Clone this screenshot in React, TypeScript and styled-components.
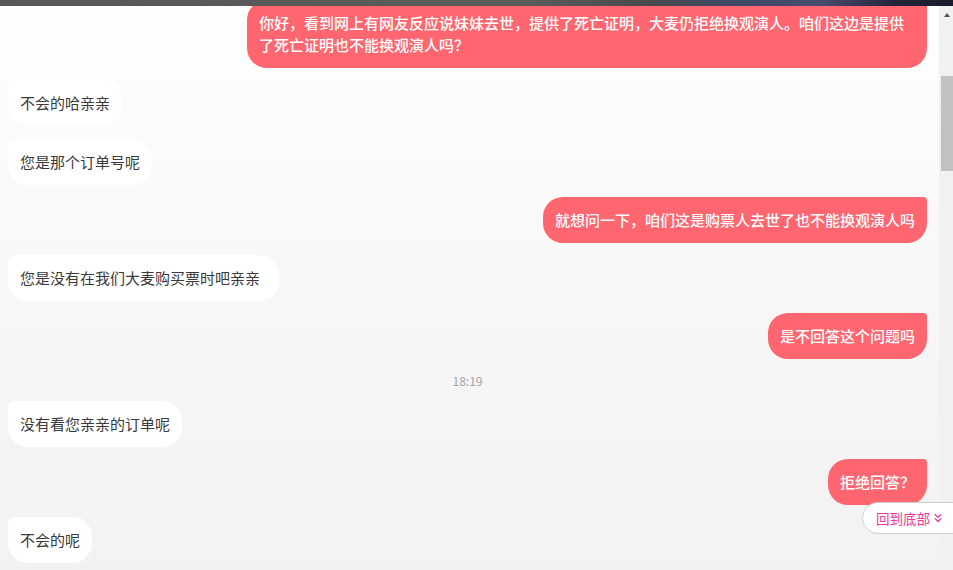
import React from "react";
import styled, { createGlobalStyle } from "styled-components";
import { ChevronsDown } from "lucide-react";

const GlobalStyle = createGlobalStyle`
  html, body {
    margin: 0;
    padding: 0;
    height: 100%;
  }
  body {
    font-family: "Noto Sans CJK SC", "Noto Sans", sans-serif;
    overflow: hidden;
  }
  #root {
    height: 100%;
  }
`;

const Page = styled.div`
  display: flex;
  flex-direction: column;
  height: 100vh;
  overflow: hidden;
`;

const TopStrip = styled.div`
  height: 6px;
  flex-shrink: 0;
  background: linear-gradient(
    90deg,
    #575757 0%,
    #5c5c5c 55%,
    #4a4a4f 68%,
    #3e4966 78%,
    #4a4d6e 86%,
    #23233a 94%,
    #1b1b2e 100%
  );
`;

const Body = styled.div`
  position: relative;
  flex: 1;
  min-height: 0;
  display: flex;
`;

const ChatArea = styled.div`
  flex: 1;
  overflow: hidden;
  background: linear-gradient(180deg, #fefefe 0%, #f7f7f7 50%, #f2f2f2 100%);
`;

const MessageList = styled.div`
  display: flex;
  flex-direction: column;
  gap: 12.25px;
  margin-top: -6px;
  padding: 0 12px 24px 8px;
`;

const Row = styled.div<{ $mine?: boolean }>`
  display: flex;
  justify-content: ${(p) => (p.$mine ? "flex-end" : "flex-start")};
`;

const Bubble = styled.div<{ $mine?: boolean }>`
  box-sizing: border-box;
  max-width: 680px;
  padding: 12px 12px;
  font-size: 15px;
  line-height: 22px;
  word-break: break-all;
  background: ${(p) => (p.$mine ? "#ff6670" : "#ffffff")};
  color: ${(p) => (p.$mine ? "#ffffff" : "#3a3a3a")};
  font-weight: ${(p) => (p.$mine ? 500 : 400)};
  border-radius: ${(p) => (p.$mine ? "20px 4px 20px 20px" : "6px 20px 20px 20px")};
`;

const TimeStamp = styled.div`
  height: 17px;
  display: flex;
  align-items: center;
  justify-content: center;
  font-size: 12px;
  line-height: 17px;
  color: #a3a3a3;
`;

const ScrollTrack = styled.div`
  width: 14px;
  flex-shrink: 0;
  background: #f1f1f1;
  display: flex;
  flex-direction: column;
  overflow: hidden;
`;

const ScrollArrow = styled.div`
  height: 17px;
  display: flex;
  align-items: center;
  padding-left: 5px;

  &::before {
    content: "";
    width: 0;
    height: 0;
    border-left: 3.5px solid transparent;
    border-right: 3.5px solid transparent;
    border-bottom: 4px solid #505050;
  }
`;

const ScrollThumb = styled.div`
  margin-top: 53px;
  margin-left: 2px;
  width: 13px;
  height: 95px;
  background: #c1c1c1;
`;

const BackToBottom = styled.button`
  position: absolute;
  right: -15px;
  bottom: 36px;
  height: 32px;
  padding: 0 22px 0 13px;
  display: flex;
  align-items: center;
  gap: 1px;
  border: 1px solid #cfcfcf;
  border-radius: 16px;
  background: #ffffff;
  color: #f0399b;
  font-family: "Noto Sans CJK SC", "Noto Sans", sans-serif;
  font-size: 13.5px;
  cursor: pointer;
`;

type Message =
  | { kind: "text"; mine: boolean; text: string }
  | { kind: "time"; text: string };

const messages: Message[] = [
  {
    kind: "text",
    mine: true,
    text: "你好，看到网上有网友反应说妹妹去世，提供了死亡证明，大麦仍拒绝换观演人。咱们这边是提供了死亡证明也不能换观演人吗？",
  },
  { kind: "text", mine: false, text: "不会的哈亲亲" },
  { kind: "text", mine: false, text: "您是那个订单号呢" },
  { kind: "text", mine: true, text: "就想问一下，咱们这是购票人去世了也不能换观演人吗" },
  { kind: "text", mine: false, text: "您是没有在我们大麦购买票时吧亲亲\u00a0\u00a0" },
  { kind: "text", mine: true, text: "是不回答这个问题吗" },
  { kind: "time", text: "18:19" },
  { kind: "text", mine: false, text: "没有看您亲亲的订单呢" },
  { kind: "text", mine: true, text: "拒绝回答？" },
  { kind: "text", mine: false, text: "不会的呢" },
];

const App = () => {
  return (
    <Page>
      <GlobalStyle />
      <TopStrip />
      <Body>
        <ChatArea>
          <MessageList>
            {messages.map((m, i) =>
              m.kind === "time" ? (
                <TimeStamp key={i}>{m.text}</TimeStamp>
              ) : (
                <Row key={i} $mine={m.mine}>
                  <Bubble $mine={m.mine}>{m.text}</Bubble>
                </Row>
              )
            )}
          </MessageList>
        </ChatArea>
        <ScrollTrack>
          <ScrollArrow />
          <ScrollThumb />
        </ScrollTrack>
        <BackToBottom>
          回到底部
          <ChevronsDown size={14} strokeWidth={2.2} />
        </BackToBottom>
      </Body>
    </Page>
  );
};

export default App;
